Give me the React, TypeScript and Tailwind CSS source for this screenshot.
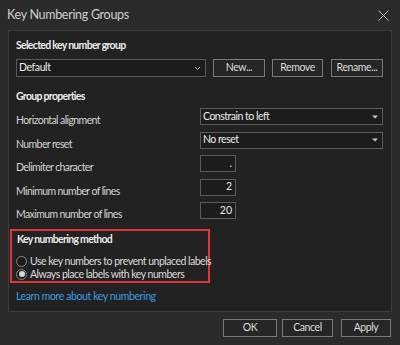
const Caret = () => (
  <svg width="6" height="4" viewBox="0 0 6 4" className="shrink-0">
    <path d="M0 0.5 L6 0.5 L3 3.5 Z" fill="#c8c8c8" />
  </svg>
);

const Chevron = () => (
  <svg width="7" height="5" viewBox="0 0 7 5" className="shrink-0">
    <path d="M1 1 L3.5 3.5 L6 1" stroke="#bdbdbd" strokeWidth="1" fill="none" />
  </svg>
);

const Button = ({ label, w }: { label: string; w: string }) => (
  <div
    className={`${w} h-[18px] flex items-center justify-center border border-[#7a7a7a] bg-[#262626] text-[#dcdcdc] text-[10.5px] tracking-[-0.4px]`}
  >
    {label}
  </div>
);

const Select = ({ value }: { value: string }) => (
  <div className="w-[183px] h-[17px] flex items-center justify-between pl-[2px] pr-[4px] border border-[#5c5c5c] bg-[#1c1c1c] text-[#ececec] text-[10.5px] tracking-[-0.5px]">
    <span>{value}</span>
    <Caret />
  </div>
);

const NumBox = ({ value }: { value: string }) => (
  <div className="w-[36px] h-[17px] flex items-center justify-end pr-[3px] border border-[#5c5c5c] bg-[#1c1c1c] text-[#ececec] text-[10.5px]">
    {value}
  </div>
);

const Row = ({ label, children }: { label: string; children: React.ReactNode }) => (
  <div className="h-[23.6px] flex items-start">
    <div className="w-[184px] pt-[4px] leading-[16px] text-[10.5px] tracking-[-0.6px] text-[#d4d4d4]">{label}</div>
    {children}
  </div>
);

export default function App() {
  return (
    <div
      className="w-[400px] h-[345px] bg-[#2b2b2b] flex flex-col overflow-hidden"
      style={{ fontFamily: 'Lato, "Noto Sans", sans-serif' }}
    >
      <div className="h-[30px] flex items-center justify-between pl-[7px] pr-[11px]">
        <span className="text-[12.5px] tracking-[-0.3px] text-[#cfcfcf]">Key Numbering Groups</span>
        <svg width="11" height="11" viewBox="0 0 11 11">
          <path d="M0.5 0.5 L10.5 10.5 M10.5 0.5 L0.5 10.5" stroke="#bdbdbd" strokeWidth="1" />
        </svg>
      </div>

      <div className="mx-[8px] h-[282px] border border-[#3d3d3d] bg-[#222222] px-[7px] pt-[6px] flex flex-col">
        <div className="leading-[16px] text-[10.5px] font-bold tracking-[-0.7px] text-[#ececec]">Selected key number group</div>
        <div className="mt-[6px] flex items-center">
          <div className="w-[190px] h-[18px] flex items-center justify-between pl-[2px] pr-[4px] border border-[#5c5c5c] bg-[#1c1c1c] text-[#ececec] text-[10.5px] tracking-[-0.4px]">
            <span>Default</span>
            <Chevron />
          </div>
          <div className="ml-[7px]"><Button label="New..." w="w-[52px]" /></div>
          <div className="ml-[7px]"><Button label="Remove" w="w-[51px]" /></div>
          <div className="ml-[8px]"><Button label="Rename..." w="w-[52px]" /></div>
        </div>

        <div className="mt-[11px] leading-[16px] text-[10.5px] font-bold tracking-[-0.7px] text-[#ececec]">Group properties</div>
        <div className="mt-[4px] flex flex-col">
          <Row label="Horizontal alignment"><Select value="Constrain to left" /></Row>
          <Row label="Number reset"><Select value="No reset" /></Row>
          <Row label="Delimiter character"><NumBox value="." /></Row>
          <Row label="Minimum number of lines"><NumBox value="2" /></Row>
          <Row label="Maximum number of lines"><NumBox value="20" /></Row>
        </div>

        <div className="mt-[3px] -ml-[6px] w-[200px] h-[54px] border-2 border-[#e0353c] pl-[5px] flex flex-col">
          <div className="leading-[16px] text-[10.5px] font-bold tracking-[-0.7px] text-[#ececec]">Key numbering method</div>
          <div className="mt-[8px] flex flex-col text-[10.5px] tracking-[-0.5px] text-[#dcdcdc] leading-[13px] whitespace-nowrap">
            <div className="flex items-center -ml-[1px]">
              <div className="shrink-0 w-[11px] h-[11px] rounded-full border border-[#8a8a8a] bg-[#1c1c1c]" />
              <span className="ml-[3px]">Use key numbers to prevent unplaced labels</span>
            </div>
            <div className="flex items-center -ml-[1px]">
              <div className="shrink-0 w-[11px] h-[11px] rounded-full border border-[#8a8a8a] bg-[#1c1c1c] flex items-center justify-center">
                <div className="w-[6px] h-[6px] rounded-full bg-[#d8d8d8]" />
              </div>
              <span className="ml-[3px]">Always place labels with key numbers</span>
            </div>
          </div>
        </div>

        <div className="mt-[5px] leading-[16px] text-[10.5px] tracking-[-0.4px] text-[#3d9be0]">Learn more about key numbering</div>
      </div>

      <div className="mt-[7px] flex justify-end pr-[9px]">
        <Button label="OK" w="w-[54px]" />
        <div className="ml-[5px]"><Button label="Cancel" w="w-[51px]" /></div>
        <div className="ml-[8px]"><Button label="Apply" w="w-[50px]" /></div>
      </div>
    </div>
  );
}
